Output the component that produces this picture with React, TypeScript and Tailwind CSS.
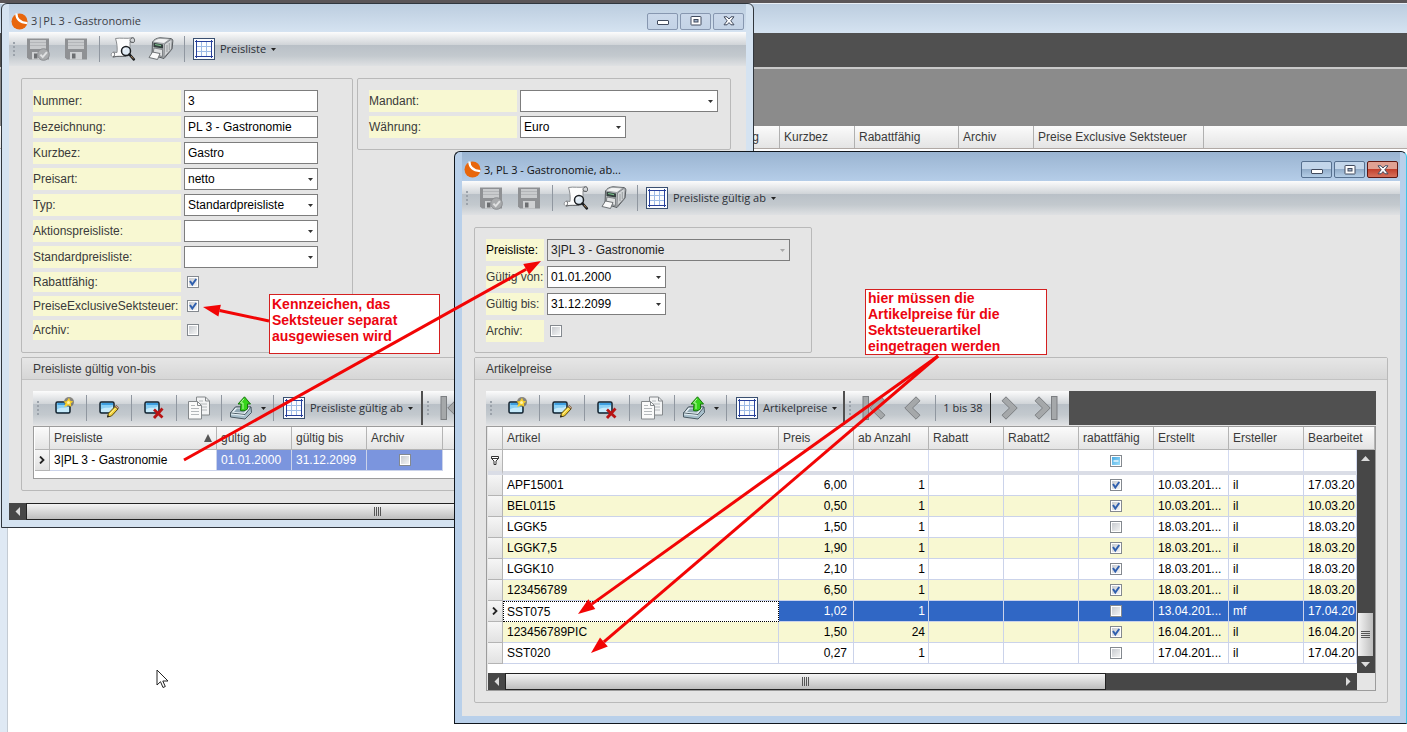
import type { ReactNode } from "react";

const arial = "font-['Liberation_Sans',Arial,sans-serif]";
const segoe = "font-['Open_Sans','Noto_Sans',sans-serif]";

/* ---------- icons ---------- */

function LogoIcon() {
  return (
    <svg width="17" height="17" viewBox="0 0 17 17" aria-hidden="true">
      <circle cx="8.5" cy="8.5" r="8" fill="#e8660c" />
      <path d="M5.4 0.6C5.4 5.6 8.8 9.6 16.2 10.2" fill="none" stroke="#fff" strokeWidth="2.2" />
    </svg>
  );
}

function SaveIcon({ check = false }: { check?: boolean }) {
  return (
    <svg width="24" height="24" viewBox="0 0 24 24" aria-hidden="true">
      <path d="M1 1.5h22v21H3l-2-2z" fill="#8f9194" />
      <rect x="4" y="3" width="16" height="9" fill="#c9cbcd" />
      <path d="M4 5.5h16M4 8.5h16" stroke="#b4b6b9" />
      <rect x="6" y="15" width="12" height="7.5" fill="#cfd1d3" />
      <rect x="8" y="16.5" width="3.5" height="5" fill="#6c6e71" />
      {check && (
        <g>
          <circle cx="17.5" cy="17.5" r="5.8" fill="#a9abad" stroke="#8b8d90" />
          <path d="M14.4 17.6l2.3 2.5 4.2-5" fill="none" stroke="#dfe0e1" strokeWidth="2" />
        </g>
      )}
    </svg>
  );
}

function PreviewIcon() {
  return (
    <svg width="26" height="24" viewBox="0 0 26 24" aria-hidden="true">
      <path d="M5.500 1.500C10 .5 17 2 22.500 .8c2.500 0 2.500 4 1 4.700l-3.500-.5L20 18c-4 2.500-11 .5-17 2-2.500-.5-2.500-4 .5-5l3.500.5C7.500 11 7 6 5.500 1.500z" fill="#fcfcfc" stroke="#8a8d90" />
      <path d="M20.500 5c-1-1.500-.5-3.700 2-4.200 2.500 0 2.500 4 1 4.700z" fill="#d4d7da" stroke="#56595c" />
      <path d="M3.500 15c1.500 1 1.500 4-.5 5 4-1.200 9-.2 13-.8" fill="none" stroke="#66696c" />
      <circle cx="16" cy="14" r="4.500" fill="#dfeaf4" stroke="#1c1f22" strokeWidth="1.500" />
      <path d="M13.500 13.500a2.600 2.600 0 0 1 2.500-2" fill="none" stroke="#fff" />
      <path d="M19.500 17.500l4.300 4.800" stroke="#1c1f22" strokeWidth="2.600" strokeLinecap="round" />
      <path d="M21 19l2.300 2.600" stroke="#b98a5a" strokeWidth="0.900" />
    </svg>
  );
}

function PrinterIcon() {
  return (
    <svg width="26" height="24" viewBox="0 0 26 24" aria-hidden="true">
      <path d="M4.500 5C6 2.500 9 1 12 .8L22 1.500c2.200.2 3 1 2.800 3L24 12l-8 9.500L4 18z" fill="#b5b9bc" stroke="#55595c" />
      <path d="M5 5C7 2.500 9.500 1.500 12 1.300l10 .7-6 4.500z" fill="#f1f2f2" stroke="#85898c" strokeWidth="0.700" />
      <path d="M16.500 7L23 2.500l1.200 1L23.500 12l-7.500 8.500z" fill="#d0d3d5" stroke="#6b6f72" strokeWidth="0.700" />
      <path d="M19 8v7M21.300 6v7" stroke="#8c9093" strokeWidth="0.800" />
      <path d="M5.500 5.800l9.500 1.700v4l-9.500-1.500z" fill="#34403e" />
      <path d="M7 7.500l6 1.200" stroke="#7cc08c" strokeWidth="1.200" />
      <path d="M6 11l8.500 1.500v7L5 17z" fill="#dfe1e2" stroke="#5f6366" strokeWidth="0.700" />
      <path d="M1 20.500L4.500 15l7.500 1.500L9.500 22.500z" fill="#fafafa" stroke="#6d7174" />
    </svg>
  );
}

function GridIcon() {
  return (
    <svg width="22" height="22" viewBox="0 0 22 22" className="shrink-0" aria-hidden="true">
      <rect x="0.500" y="0.500" width="21" height="21" fill="#fbfdff" stroke="#3a4f70" />
      <path d="M4 8.500h14M4 13.500h14M8.500 4v14M13.500 4v14" stroke="#9dbbe6" />
      <path d="M2 3.500h18M2 18.500h18M3.500 2v18M18.500 2v18" stroke="#27409c" />
    </svg>
  );
}

function WindowShape() {
  return (
    <g>
      <rect x="1" y="5" width="14" height="11" rx="1.500" fill="#8bd0f5" stroke="#14222e" strokeWidth="1.500" />
      <rect x="2.500" y="6" width="11.500" height="2" fill="#3f9fe0" />
      <path d="M2 12.500C6 9.500 11 12 14 9v6H2z" fill="#c6eafa" />
    </g>
  );
}

function NewIcon() {
  return (
    <svg width="20" height="22" viewBox="0 0 20 22" aria-hidden="true">
      <WindowShape />
      <circle cx="14" cy="5" r="5" fill="#5f5c52" fillOpacity="0.7" />
      <path d="M14 .8l1.300 2.900 3 .8-2.300 1.800.2 3.400-3-1.500-4 2 1.300-3.900-2-1.800 3.400-.6z" fill="#f7cf2c" />
      <circle cx="13.500" cy="5.500" r="1.500" fill="#fff4a8" />
    </svg>
  );
}

function EditIcon() {
  return (
    <svg width="20" height="22" viewBox="0 0 20 22" aria-hidden="true">
      <WindowShape />
      <path d="M8.500 20l1-3.800L16 9.500l3 2.500-6.500 7z" fill="#f3d23b" stroke="#5b4a10" />
      <path d="M10.800 17.200l5.700-6" stroke="#fff2a0" />
      <path d="M8 20.500l.8-2.500 1.700 1.500z" fill="#222" />
      <path d="M16 9.500l1.200-1.200 2.500 2.200L19 12z" fill="#cfa0a0" stroke="#5b4a10" strokeWidth="0.600" />
    </svg>
  );
}

function DeleteIcon() {
  return (
    <svg width="20" height="22" viewBox="0 0 20 22" aria-hidden="true">
      <WindowShape />
      <path d="M10 12.500l8.500 8M18.500 11.500L10 21" stroke="#b81414" strokeWidth="2.800" />
    </svg>
  );
}

function CopyIcon() {
  return (
    <svg width="24" height="24" viewBox="0 0 24 24" aria-hidden="true">
      <path d="M9.500 1h9l4 4v14h-13z" fill="#f2f3f4" stroke="#85898c" />
      <path d="M18.500 1v4h4" fill="none" stroke="#85898c" />
      <path d="M12 5h4M12 8h8M12 11h8M12 14h8" stroke="#b4b8bb" />
      <path d="M1.500 5.500h9l4 4V23h-13z" fill="#fafafa" stroke="#85898c" />
      <path d="M10.500 5.500v4h4" fill="none" stroke="#85898c" />
      <path d="M4 9.500h4M4 12.500h8M4 15.500h8M4 18.500h8" stroke="#b4b8bb" />
    </svg>
  );
}

function ExportIcon() {
  return (
    <svg width="24" height="24" viewBox="0 0 24 24" className="shrink-0" aria-hidden="true">
      <path d="M1.500 17L6.500 11H22l.5 5.500L16 23l-14.500-2z" fill="#a8bfcb" stroke="#4b5b64" />
      <path d="M1.500 17L6.500 11H22l-6 7.500z" fill="#e3edf2" stroke="#4b5b64" />
      <path d="M5 16l3-3.500h10.500L15 16.500z" fill="#8fa6b2" />
      <path d="M2 18l13.500 1.500" stroke="#e8f1f5" />
      <path d="M15.500.8l6 7.200h-3v5c-2.500 2-5 2-7 1.500l.5-6.500H9z" fill="#35d41a" stroke="#17740c" />
      <path d="M15 2.800L11.500 7H14v6" stroke="#b5f7a2" fill="none" />
    </svg>
  );
}

function NavIcon({ kind }: { kind: "first" | "prev" | "next" | "last" }) {
  const flip = kind === "next" || kind === "last";
  const bar = kind === "first" || kind === "last";
  return (
    <svg width={bar ? 24 : 17} height="24" viewBox={bar ? "0 0 24 24" : "7 0 17 24"} className={flip ? "-scale-x-100" : ""} aria-hidden="true">
      {bar && <rect x="1" y="0.500" width="5.500" height="23" fill="#a5a8aa" stroke="#7c7f82" />}
      <path d="M19 .8l4 4L15.500 12l7.500 7.200-4 4L7.800 12z" fill="#a5a8aa" stroke="#7c7f82" />
    </svg>
  );
}

function Caret({ className = "fill-[#222]" }: { className?: string }) {
  return (
    <svg width="5" height="3" viewBox="0 0 5 3" className={`shrink-0 ${className}`} aria-hidden="true">
      <path d="M0 0h5L2.500 3z" />
    </svg>
  );
}

function RowMarker() {
  return (
    <svg width="6" height="8" viewBox="0 0 6 8" className="mx-auto" aria-hidden="true">
      <path d="M1 .5L4.500 4 1 7.500" fill="none" stroke="#222" strokeWidth="1.800" />
    </svg>
  );
}

/* ---------- window chrome ---------- */

function CaptionButton({ kind, active }: { kind: "Minimieren" | "Maximieren" | "Schließen"; active: boolean }) {
  let tone = "border-[#8797b0] bg-linear-to-b from-[#cbd8ea] to-[#c3d3e6]";
  if (active) tone = "border-[#56708f] bg-linear-to-b from-[#c3d6ea] from-45% via-[#92adca] via-50% to-[#b4cde6]";
  if (active && kind === "Schließen") tone = "border-[#5e1712] bg-linear-to-b from-[#e0a193] from-45% via-[#c2402d] via-50% to-[#d6715c]";
  return (
    <button type="button" aria-label={kind} className={`flex h-[17px] w-[31px] items-center justify-center rounded-[2px] border ${tone}`}>
      <svg width="12" height="10" viewBox="0 0 12 10" fill="#fff" stroke="#414b5e" aria-hidden="true">
        {kind === "Minimieren" && <rect x="0.500" y="4.500" width="11" height="4" rx="0.500" />}
        {kind === "Maximieren" && (
          <>
            <rect x="1" y="0.500" width="10" height="8.500" rx="0.500" />
            <rect x="4" y="3.500" width="4" height="2.500" fill="#9fb1c9" />
          </>
        )}
        {kind === "Schließen" && (
          <path d="M1 .8h3L6 3 8 .8h3L7.800 4.800 11 8.800H8L6 6.600 4 8.800H1l3.200-4z" />
        )}
      </svg>
    </button>
  );
}

function TitleBar({ title, active = false }: { title: string; active?: boolean }) {
  const tone = active ? "h-[29px] from-[#9ab4d1] to-[#b5cde8]" : "h-7 from-[#bccddf] to-[#d5e3f1]";
  return (
    <header className={`flex shrink-0 items-center gap-[3px] bg-linear-to-b px-0.5 pt-1.5 ${tone}`}>
      <LogoIcon />
      <h1 className={`${segoe} flex-1 text-[11px] leading-4 whitespace-nowrap ${active ? "text-[#111]" : "text-[#3c4046]"}`}>{title}</h1>
      <div className="flex gap-0.5">
        <CaptionButton kind="Minimieren" active={active} />
        <CaptionButton kind="Maximieren" active={active} />
        <CaptionButton kind="Schließen" active={active} />
      </div>
    </header>
  );
}

function Bar({ className = "", children }: { className?: string; children: ReactNode }) {
  return (
    <div className={`flex h-[34px] shrink-0 items-center bg-[linear-gradient(180deg,#fcfcfc_0%,#d0d4d8_38%,#b9c0c7_39%,#c3c9ce_70%,#dfe1e3_100%)] ${className}`}>
      {children}
    </div>
  );
}

function Grip({ className = "w-[10px]" }: { className?: string }) {
  return (
    <div className={`flex shrink-0 flex-col items-center gap-0.5 ${className}`}>
      {[0, 1, 2, 3].map((i) => (
        <span key={i} className="size-0.5 bg-[#9ba2aa]" />
      ))}
    </div>
  );
}

function IconButton({ label, className = "w-[38px]", children }: { label: string; className?: string; children: ReactNode }) {
  return (
    <button type="button" aria-label={label} className={`flex shrink-0 items-center justify-center ${className}`}>
      {children}
    </button>
  );
}

function Divider() {
  return <span className="h-[26px] w-px shrink-0 bg-[#9097a0]" />;
}

function MenuButton({ label }: { label: string }) {
  return (
    <button type="button" className={`${segoe} flex items-center gap-[5px] text-[11px] leading-4 whitespace-nowrap text-[#2b2f36]`}>
      <GridIcon />
      <span>{label}</span>
      <Caret />
    </button>
  );
}

function MainBar({ menu }: { menu: string }) {
  return (
    <Bar>
      <Grip />
      <IconButton label="Speichern und schließen"><SaveIcon check /></IconButton>
      <IconButton label="Speichern"><SaveIcon /></IconButton>
      <span className="flex w-[9px] justify-center"><Divider /></span>
      <IconButton label="Vorschau"><PreviewIcon /></IconButton>
      <IconButton label="Drucken"><PrinterIcon /></IconButton>
      <span className="mr-[5px] flex w-2 justify-center"><Divider /></span>
      <MenuButton label={menu} />
    </Bar>
  );
}

function ListBar({ menu, className, position }: { menu: string; className: string; position: string }) {
  return (
    <div className="flex overflow-hidden bg-[#505050]">
      <Bar className={className}>
        <Grip />
        <IconButton label="Neu" className="w-[43px]"><NewIcon /></IconButton>
        <Divider />
        <IconButton label="Bearbeiten" className="w-11"><EditIcon /></IconButton>
        <Divider />
        <IconButton label="Löschen" className="w-11"><DeleteIcon /></IconButton>
        <Divider />
        <IconButton label="Kopieren" className="w-11"><CopyIcon /></IconButton>
        <Divider />
        <IconButton label="Exportieren" className="w-[51px] gap-2">
          <ExportIcon />
          <Caret />
        </IconButton>
        <Divider />
        <span className="w-[9px] shrink-0" />
        <MenuButton label={menu} />
      </Bar>
      <Bar className="ml-0.5 w-[224px]">
        <Grip />
        <IconButton label="Erster"><NavIcon kind="first" /></IconButton>
        <IconButton label="Zurück"><NavIcon kind="prev" /></IconButton>
        <span className="flex w-[5px] justify-end"><Divider /></span>
        <span className={`${segoe} w-[54px] text-center text-[11px] leading-4 whitespace-nowrap text-[#2b2f36]`}>{position}</span>
        <span className="h-[30px] w-px shrink-0 bg-[#222]" />
        <IconButton label="Weiter" className="w-9"><NavIcon kind="next" /></IconButton>
        <IconButton label="Letzter"><NavIcon kind="last" /></IconButton>
      </Bar>
    </div>
  );
}

/* ---------- form parts ---------- */

const labelTone = "bg-[#f8f8d2] leading-[22px] whitespace-nowrap";

function TextField({ id, label, value }: { id: string; label: string; value: string }) {
  return (
    <>
      <label htmlFor={id} className={`${labelTone} h-[22px] text-[#3a3a3a]`}>{label}</label>
      <input id={id} type="text" defaultValue={value} className="h-[22px] w-[134px] border border-[#7d7d7d] bg-white px-[3px] text-black" />
    </>
  );
}

function SelectField({ id, label, value, className = "w-[134px]", disabled = false }: { id: string; label: string; value: string; className?: string; disabled?: boolean }) {
  return (
    <>
      <label htmlFor={id} className={`${labelTone} h-[22px] ${disabled ? "text-black" : "text-[#3a3a3a]"}`}>{label}</label>
      <span className={`grid items-center ${className}`}>
        <select
          id={id}
          disabled={disabled}
          defaultValue={value}
          className={`col-start-1 row-start-1 h-[22px] w-full appearance-none border border-[#7d7d7d] px-[3px] opacity-100 ${disabled ? "bg-[#e5e5e5] text-[#222]" : "bg-white text-black"}`}
        >
          <option value={value}>{value}</option>
        </select>
        <span className="pointer-events-none col-start-1 row-start-1 mr-[5px] justify-self-end">
          <Caret className={disabled ? "fill-[#a8a8a8]" : "fill-[#333]"} />
        </span>
      </span>
    </>
  );
}

type CheckState = "on" | "off" | "mixed";

function CheckBox({ state, label, id }: { state: CheckState; label?: string; id?: string }) {
  return (
    <span className="inline-grid size-3 align-middle">
      <input
        id={id}
        type="checkbox"
        aria-label={label}
        defaultChecked={state === "on"}
        className={`col-start-1 row-start-1 size-3 appearance-none border border-[#84898f] shadow-[inset_0_0_0_1px_#fff] ${
          state === "mixed" ? "bg-linear-to-br from-[#3aa4e0] to-[#a6e4fb]" : "bg-linear-to-br from-[#c3c7cc] to-[#f8f8f8]"
        }`}
      />
      {state === "on" && (
        <svg viewBox="0 0 12 12" className="pointer-events-none col-start-1 row-start-1 size-3" aria-hidden="true">
          <path d="M3 5l2.300 3.500L9.200 3" fill="none" stroke="#2f5fae" strokeWidth="2" />
        </svg>
      )}
      {state === "mixed" && (
        <svg viewBox="0 0 12 12" className="pointer-events-none col-start-1 row-start-1 size-3" aria-hidden="true">
          <path d="M3.500 6h5" stroke="#e8f8ff" strokeWidth="1.500" />
        </svg>
      )}
    </span>
  );
}

function CheckField({ id, label, state, className = "h-5 leading-5" }: { id: string; label: string; state: CheckState; className?: string }) {
  return (
    <>
      <label htmlFor={id} className={`bg-[#f8f8d2] whitespace-nowrap text-[#3a3a3a] ${className}`}>{label}</label>
      <span className="flex items-center pl-[3px]"><CheckBox id={id} state={state} /></span>
    </>
  );
}

function Group({ title, children }: { title: string; children: ReactNode }) {
  return (
    <section className="rounded-[2px] border border-[#b9b9b9]">
      <h2 className="h-[22px] border-b border-[#c2c2c2] bg-linear-to-b from-[#e6e6e6] to-[#d6d6d6] pl-[11px] leading-[22px] text-[#3a3a3a]">{title}</h2>
      <div className="p-[11px]">{children}</div>
    </section>
  );
}

/* ---------- scroll bars ---------- */

function ScrollArrow({ dir }: { dir: "links" | "rechts" | "oben" | "unten" }) {
  const paths = {
    links: "M8 1v9L3.500 5.500z",
    rechts: "M3 1v9l4.500-4.500z",
    oben: "M1 8h9L5.500 3z",
    unten: "M1 3h9L5.500 8z",
  };
  return (
    <button type="button" aria-label={`Nach ${dir}`} className="flex size-[17px] shrink-0 items-center justify-center">
      <svg width="11" height="11" viewBox="0 0 11 11" fill="#dcdcdc" aria-hidden="true">
        <path d={paths[dir]} />
      </svg>
    </button>
  );
}

function ScrollX({ thumb }: { thumb: string }) {
  return (
    <div className="flex h-[17px] min-w-0 flex-1 bg-[#474747]">
      <ScrollArrow dir="links" />
      <div className="flex-1">
        <div className={`flex h-[17px] items-center justify-center gap-px border border-[#222] bg-linear-to-b from-[#f4f4f4] to-[#bdbdbd] ${thumb}`}>
          {[0, 1, 2, 3].map((i) => (
            <span key={i} className="h-[9px] w-px bg-[#555]" />
          ))}
        </div>
      </div>
      <ScrollArrow dir="rechts" />
    </div>
  );
}

/* ---------- tables ---------- */

const th = "h-[23px] overflow-hidden border-r border-b border-[#b4b4b4] bg-linear-to-b from-[#fbfbfb] to-[#e4e4e4] px-1 text-left font-normal whitespace-nowrap text-[#3a3a3a]";
const marker = "border-r border-b border-[#b4b4b4] bg-linear-to-b from-[#f6f6f6] to-[#e2e2e2] p-0";

interface Article {
  name: string;
  price: string;
  amount: string;
  discountable: boolean;
  created: string;
  author: string;
  edited: string;
}

const articles: Article[] = [
  { name: "APF15001", price: "6,00", amount: "1", discountable: true, created: "10.03.201...", author: "il", edited: "17.03.20" },
  { name: "BEL0115", price: "0,50", amount: "1", discountable: true, created: "10.03.201...", author: "il", edited: "10.03.20" },
  { name: "LGGK5", price: "1,50", amount: "1", discountable: false, created: "18.03.201...", author: "il", edited: "18.03.20" },
  { name: "LGGK7,5", price: "1,90", amount: "1", discountable: true, created: "18.03.201...", author: "il", edited: "18.03.20" },
  { name: "LGGK10", price: "2,10", amount: "1", discountable: true, created: "18.03.201...", author: "il", edited: "18.03.20" },
  { name: "123456789", price: "6,50", amount: "1", discountable: true, created: "18.03.201...", author: "il", edited: "18.03.20" },
  { name: "SST075", price: "1,02", amount: "1", discountable: false, created: "13.04.201...", author: "mf", edited: "17.04.20" },
  { name: "123456789PIC", price: "1,50", amount: "24", discountable: true, created: "16.04.201...", author: "il", edited: "16.04.20" },
  { name: "SST020", price: "0,27", amount: "1", discountable: false, created: "17.04.201...", author: "il", edited: "17.04.20" },
];

const selected = "SST075";

function ArticleTable() {
  return (
    <table className="w-full table-fixed border-separate border-spacing-0">
      <colgroup>
        <col className="w-[15px]" />
        <col />
        <col className="w-[75px]" />
        <col className="w-[75px]" />
        <col className="w-[75px]" />
        <col className="w-[75px]" />
        <col className="w-[75px]" />
        <col className="w-[75px]" />
        <col className="w-[75px]" />
        <col className="w-[53px]" />
        <col className="w-[18px]" />
      </colgroup>
      <thead>
        <tr>
          <th className={th} />
          <th className={th}>Artikel</th>
          <th className={th}>Preis</th>
          <th className={th}>ab Anzahl</th>
          <th className={th}>Rabatt</th>
          <th className={th}>Rabatt2</th>
          <th className={th}>rabattfähig</th>
          <th className={th}>Erstellt</th>
          <th className={th}>Ersteller</th>
          <th className={th} colSpan={2}>Bearbeitet</th>
        </tr>
      </thead>
      <tbody>
        <tr className="h-[25px]">
          <td className={`${marker} border-b-4 border-b-[#dadde6]`}>
            <svg width="8" height="9" viewBox="0 0 8 9" className="mx-auto" aria-hidden="true">
              <path d="M.5.500h7v2L5 5v3.500H3V5L.5 2.500zM.5 2.500h7" fill="#fff" stroke="#333" />
            </svg>
          </td>
          {["Artikel", "Preis", "ab Anzahl", "Rabatt", "Rabatt2", "rabattfähig", "Erstellt", "Ersteller", "Bearbeitet"].map((name) => (
            <td key={name} className="border-r border-b-4 border-[#d3daf0] border-b-[#dadde6] bg-white p-0 text-center leading-none">
              {name === "rabattfähig" && <CheckBox state="mixed" label="Filter rabattfähig" />}
            </td>
          ))}
          <td rowSpan={11} className="bg-[#474747] p-0 align-top">
            <div className="flex h-[223px] flex-col items-center">
              <ScrollArrow dir="oben" />
              <span className="flex-1" />
              <div className="flex h-[43px] w-[15px] flex-col items-center justify-center gap-px bg-linear-to-r from-[#f4f4f4] to-[#bdbdbd]">
                {[0, 1, 2, 3].map((i) => (
                  <span key={i} className="h-px w-[9px] bg-[#555]" />
                ))}
              </div>
              <ScrollArrow dir="unten" />
            </div>
          </td>
        </tr>
        {articles.map((row, index) => {
          const isSelected = row.name === selected;
          const tone = isSelected ? "bg-[#3067c5] text-white" : index % 2 ? "bg-[#f8f8d2] text-black" : "bg-white text-black";
          const td = `overflow-hidden border-r border-b border-[#cbd3ea] py-0 whitespace-nowrap ${tone}`;
          return (
            <tr key={row.name} className="h-[21px]">
              <td className={marker}>{isSelected && <RowMarker />}</td>
              {isSelected ? (
                <td className="border border-dotted border-black bg-white px-[3px] py-0 text-black">{row.name}</td>
              ) : (
                <td className={`${td} px-1`}>{row.name}</td>
              )}
              <td className={`${td} pr-[6px] text-right`}>{row.price}</td>
              <td className={`${td} pr-[3px] text-right`}>{row.amount}</td>
              <td className={td} />
              <td className={td} />
              <td className={`${td} px-0 text-center leading-none`}>
                <CheckBox state={row.discountable ? "on" : "off"} label={`${row.name} rabattfähig`} />
              </td>
              <td className={`${td} px-1`}>{row.created}</td>
              <td className={`${td} px-1`}>{row.author}</td>
              <td className={`${td} pr-0 pl-1`}>{row.edited}</td>
            </tr>
          );
        })}
        <tr className="h-[9px]">
          <td colSpan={10} className="bg-white p-0" />
        </tr>
      </tbody>
    </table>
  );
}

function ValidityTable() {
  const cell = "border-r border-b border-[#cbd3ea] bg-[#7b95de] px-1 py-0 text-white";
  return (
    <table className="w-full table-fixed border-separate border-spacing-0">
      <colgroup>
        <col className="w-[15px]" />
        <col className="w-[167px]" />
        <col className="w-[75px]" />
        <col className="w-[75px]" />
        <col className="w-[76px]" />
        <col />
      </colgroup>
      <thead>
        <tr>
          <th className={th} />
          <th className={th}>
            <span className="flex items-center justify-between">
              Preisliste
              <svg width="8" height="8" viewBox="0 0 8 8" aria-hidden="true">
                <path d="M4 0l4 8H0z" fill="#555" />
              </svg>
            </span>
          </th>
          <th className={th}>gültig ab</th>
          <th className={th}>gültig bis</th>
          <th className={th}>Archiv</th>
          <th className={th} />
        </tr>
      </thead>
      <tbody>
        <tr className="h-[21px]">
          <td className={marker}><RowMarker /></td>
          <td className="border-r border-b border-[#cbd3ea] bg-white px-1 py-0 text-black">3|PL 3 - Gastronomie</td>
          <td className={cell}>01.01.2000</td>
          <td className={cell}>31.12.2099</td>
          <td className={`${cell} text-center leading-none`}><CheckBox state="off" label="Archiv" /></td>
          <td className="bg-white p-0" />
        </tr>
      </tbody>
    </table>
  );
}

/* ---------- windows ---------- */

function Backdrop() {
  const head = "overflow-hidden border-r border-[#b0b0b0] px-1 text-left font-normal";
  return (
    <div className="flex min-h-screen flex-col border-t-[3px] border-[#5a5557] bg-white">
      <div className="h-[30px] border-t border-[#e8eef5] bg-linear-to-b from-[#bccddf] to-[#d5e3f1]" />
      <div className="h-[34px] bg-[#505050]" />
      <div className="h-[59px] border-t-2 border-[#c9c9c9] bg-[#8b8b8b]" />
      <table className="w-full table-fixed border-separate border-spacing-0 border-b border-[#b0a8a4]">
        <thead>
          <tr className="h-[22px] bg-linear-to-b from-[#fbfbfb] to-[#e4e4e4] text-[#3a3a3a]">
            <th className={`${head} w-[780px]`}><span className="block pr-4 text-right">Bezeichnung</span></th>
            <th className={`${head} w-[75px]`}>Kurzbez</th>
            <th className={`${head} w-[104px]`}>Rabattfähig</th>
            <th className={`${head} w-[75px]`}>Archiv</th>
            <th className={`${head} w-[170px]`}>Preise Exclusive Sektsteuer</th>
            <th />
          </tr>
        </thead>
      </table>
      <div className="w-2 flex-1 border-r border-[#c4cbd3] bg-[#dfe9f4]" />
    </div>
  );
}

function PriceListWindow() {
  return (
    <main className="absolute top-[3px] left-px w-[753px] overflow-hidden rounded-t-md border border-[#30363d] bg-[#d5e3f1] px-[7px] pb-[7px]">
      <TitleBar title="3|PL 3 - Gastronomie" />
      <div className="overflow-hidden bg-[#e5e5e5]">
        <MainBar menu="Preisliste" />
        <div className="flex flex-col gap-1 py-3 pr-[15px] pl-3">
          <div className="flex items-start gap-1">
            <section className="w-[332px] shrink-0 rounded-[2px] border border-[#b9b9b9] p-[11px] pb-3">
              <div className="grid grid-cols-[148px_134px] gap-x-[3px] gap-y-1">
                <TextField id="nummer" label="Nummer:" value="3" />
                <TextField id="bezeichnung" label="Bezeichnung:" value="PL 3 - Gastronomie" />
                <TextField id="kurzbez" label="Kurzbez:" value="Gastro" />
                <SelectField id="preisart" label="Preisart:" value="netto" />
                <SelectField id="typ" label="Typ:" value="Standardpreisliste" />
                <SelectField id="aktionspreisliste" label="Aktionspreisliste:" value="" />
                <SelectField id="standardpreisliste" label="Standardpreisliste:" value="" />
                <CheckField id="rabattfaehig" label="Rabattfähig:" state="on" />
                <CheckField id="sektsteuer" label="PreiseExclusiveSektsteuer:" state="on" />
                <CheckField id="archiv" label="Archiv:" state="off" />
              </div>
            </section>
            <section className="flex-1 rounded-[2px] border border-[#b9b9b9] p-[11px]">
              <div className="grid grid-cols-[148px_1fr] gap-x-[3px] gap-y-1">
                <SelectField id="mandant" label="Mandant:" value="" className="w-[198px]" />
                <SelectField id="waehrung" label="Währung:" value="Euro" className="w-[106px]" />
              </div>
            </section>
          </div>
          <Group title="Preisliste gültig von-bis">
            <ListBar menu="Preisliste gültig ab" className="w-[388px]" position="1 bis 1" />
            <div className="mt-px border border-[#9c9c9c] bg-white pb-[7px] pl-px">
              <ValidityTable />
            </div>
          </Group>
        </div>
        <div className="flex">
          <ScrollX thumb="w-full" />
        </div>
      </div>
    </main>
  );
}

function ValidityWindow() {
  return (
    <main className="absolute top-[151px] right-0 left-[454px] overflow-hidden rounded-t-md border border-r-[#3fc6e8] border-[#10161d] bg-[#b9d0ea] px-[7px] pr-1.5 pb-[7px]">
      <TitleBar title="3, PL 3 - Gastronomie, ab..." active />
      <div className="bg-[#e5e5e5]">
        <MainBar menu="Preisliste gültig ab" />
        <div className="flex flex-col gap-1 p-3 pb-[13px]">
          <section className="w-[338px] rounded-[2px] border border-[#b9b9b9] p-[11px] pb-[10px]">
            <div className="grid grid-cols-[58px_1fr] gap-x-[3px] gap-y-[5px]">
              <SelectField id="ab-preisliste" label="Preisliste:" value="3|PL 3 - Gastronomie" className="w-[243px]" disabled />
              <SelectField id="gueltig-von" label="Gültig von:" value="01.01.2000" className="w-[119px]" />
              <SelectField id="gueltig-bis" label="Gültig bis:" value="31.12.2099" className="w-[119px]" />
              <CheckField id="ab-archiv" label="Archiv:" state="off" className="h-[22px] leading-[22px]" />
            </div>
          </section>
          <Group title="Artikelpreise">
            <ListBar menu="Artikelpreise" className="w-[357px]" position="1 bis 38" />
            <div className="mt-px border border-[#9c9c9c] pl-px">
              <ArticleTable />
              <div className="flex pr-[18px]">
                <ScrollX thumb="w-[72%]" />
              </div>
            </div>
          </Group>
        </div>
      </div>
    </main>
  );
}

/* ---------- annotations ---------- */

function Note({ className, children }: { className: string; children: ReactNode }) {
  return (
    <aside className={`absolute border border-[#d42020] bg-white px-0.5 text-[14px] leading-4 font-bold whitespace-nowrap text-[#ec0510] ${className}`}>
      {children}
    </aside>
  );
}

const arrows = [
  { from: [269, 321], to: [203, 307] },
  { from: [184, 460], to: [541, 261] },
  { from: [938, 356], to: [578, 614] },
  { from: [938, 356], to: [591, 653] },
];

function Arrows() {
  return (
    <svg className="pointer-events-none absolute top-0 left-0 h-[732px] w-[1407px]" viewBox="0 0 1407 732" aria-hidden="true">
      {arrows.map(({ from: [x1, y1], to: [x2, y2] }) => {
        const length = Math.hypot(x2 - x1, y2 - y1);
        const dx = (x2 - x1) / length;
        const dy = (y2 - y1) / length;
        const bx = x2 - dx * 17;
        const by = y2 - dy * 17;
        return (
          <g key={`${x2}-${y2}`} fill="#f20505" stroke="#f20505">
            <line x1={x1} y1={y1} x2={bx} y2={by} strokeWidth="3" />
            <polygon stroke="none" points={`${x2},${y2} ${bx - dy * 6},${by + dx * 6} ${bx + dy * 6},${by - dx * 6}`} />
          </g>
        );
      })}
    </svg>
  );
}

function Pointer() {
  return (
    <svg width="13" height="20" viewBox="0 0 13 20" className="absolute top-[669px] left-[156px]" aria-hidden="true">
      <path d="M1 1v15l3.500-3.300 2.500 5.800 2.300-1-2.500-5.500H12z" fill="#fff" stroke="#222" />
    </svg>
  );
}

export default function App() {
  return (
    <div className={`${arial} relative min-h-screen overflow-hidden text-[12px] leading-4`}>
      <Backdrop />
      <PriceListWindow />
      <ValidityWindow />
      <Note className="top-[294px] left-[269px] h-[60px] w-[171px] pt-px">
        Kennzeichen, das
        <br />
        Sektsteuer separat
        <br />
        ausgewiesen wird
      </Note>
      <Note className="top-[289px] left-[865px] w-[182px]">
        hier müssen die
        <br />
        Artikelpreise für die
        <br />
        Sektsteuerartikel
        <br />
        eingetragen werden
      </Note>
      <Arrows />
      <Pointer />
    </div>
  );
}
